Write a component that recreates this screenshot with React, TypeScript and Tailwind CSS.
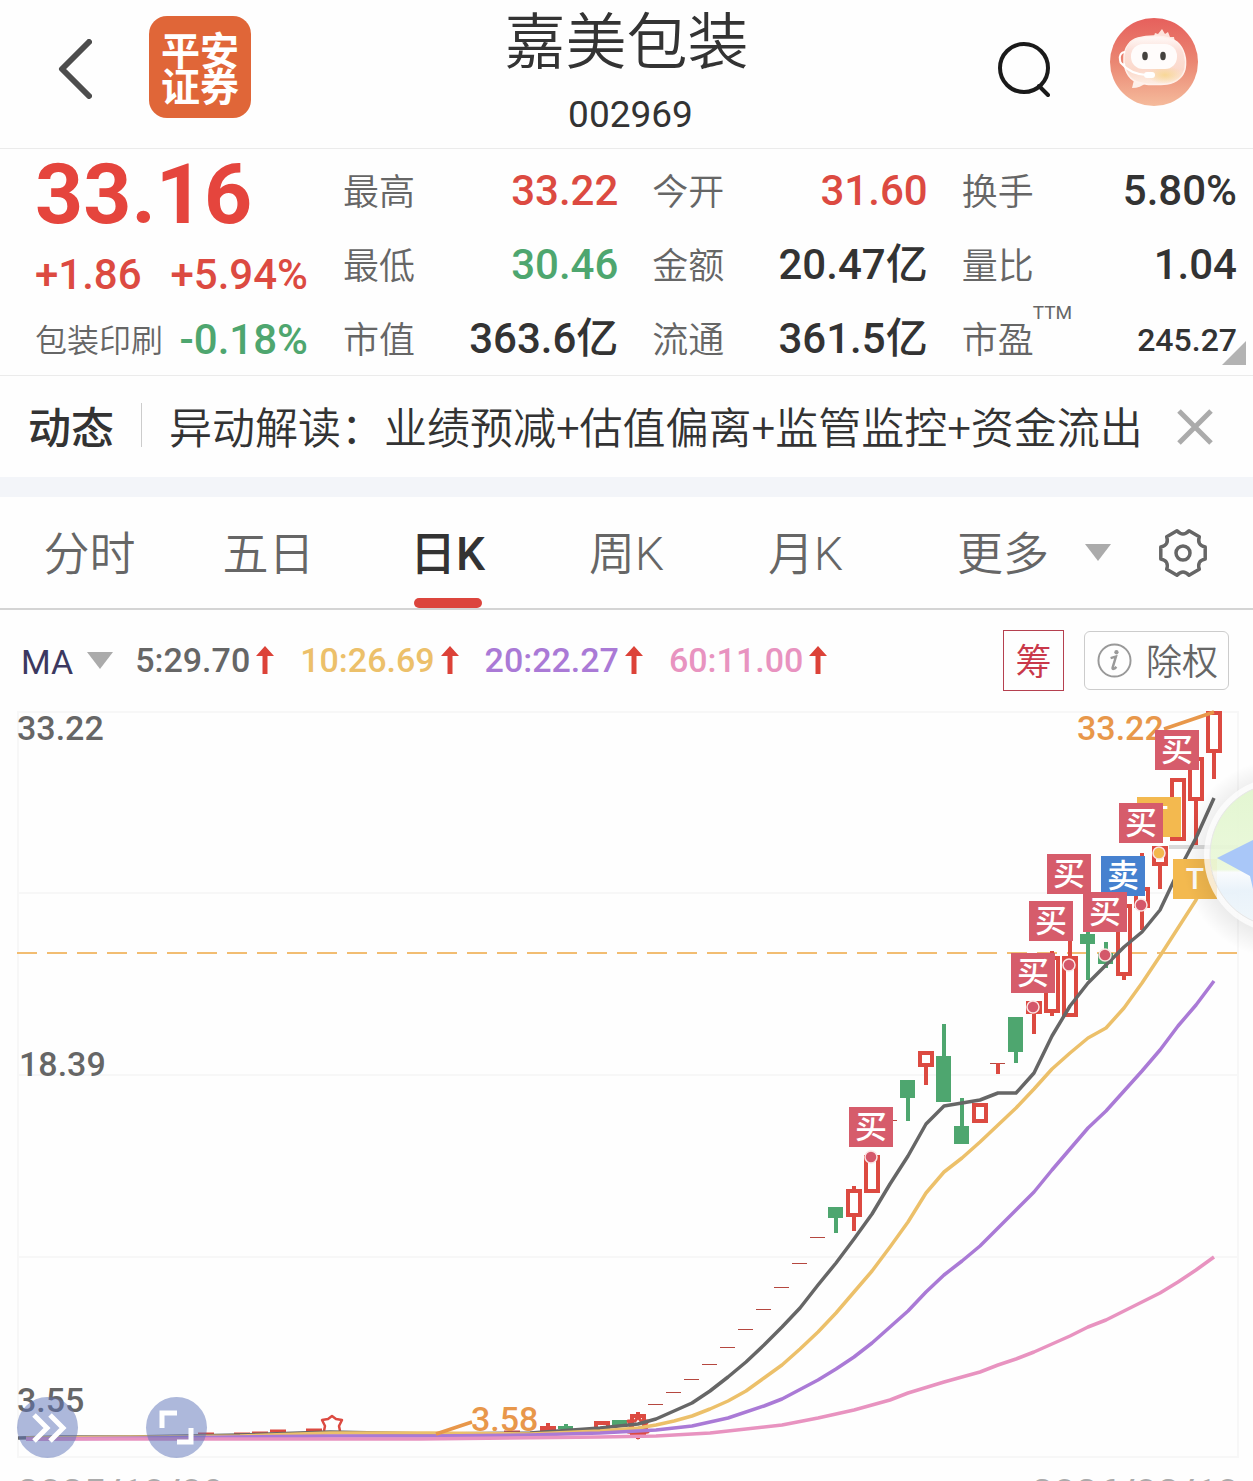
import type { ReactNode } from "react";

const UP = "#dc4a41";
const DOWN = "#4ea66f";

type Candle = { x: number; top: number; bottom: number; high?: number; low?: number; down?: boolean };

const candles: Candle[] = [
  { x: 1214, top: 711, bottom: 753, low: 779 },
  { x: 1196, top: 757, bottom: 801, low: 845 },
  { x: 1178, top: 778, bottom: 841 },
  { x: 1160, top: 846, bottom: 866, low: 889 },
  { x: 1142, top: 887, bottom: 908, high: 853, low: 930 },
  { x: 1124, top: 904, bottom: 976, low: 980 },
  { x: 1106, top: 953, bottom: 964, high: 942, low: 968, down: true },
  { x: 1088, top: 934, bottom: 944, high: 925, low: 980, down: true },
  { x: 1070, top: 956, bottom: 1017, high: 930 },
  { x: 1052, top: 956, bottom: 1013, high: 951, low: 1016 },
  { x: 1034, top: 1001, bottom: 1014, low: 1034 },
  { x: 1016, top: 1017, bottom: 1052, low: 1063, down: true },
  { x: 980, top: 1103, bottom: 1123 },
  { x: 962, top: 1126, bottom: 1144, high: 1098, down: true },
  { x: 944, top: 1056, bottom: 1102, high: 1024, down: true },
  { x: 926, top: 1051, bottom: 1067, low: 1085 },
  { x: 908, top: 1080, bottom: 1098, low: 1121, down: true },
  { x: 872, top: 1155, bottom: 1193 },
  { x: 854, top: 1189, bottom: 1217, high: 1186, low: 1231 },
  { x: 836, top: 1207, bottom: 1218, low: 1233, down: true },
  { x: 638, top: 1414, bottom: 1435, high: 1412, low: 1439 },
  { x: 620, top: 1420, bottom: 1425, down: true },
  { x: 602, top: 1421, bottom: 1431 },
  { x: 566, top: 1426, bottom: 1429, high: 1424, down: true },
  { x: 548, top: 1426, bottom: 1433, high: 1423 },
];

const flatDays: [number, number][] = [
  [890, 1120], [818, 1237], [800, 1263], [782, 1287], [764, 1309], [746, 1329],
  [728, 1347], [710, 1364], [692, 1379], [674, 1392], [656, 1404], [998, 1063],
];

const smallDays: [number, number][] = [
  [206, 1434], [242, 1434], [260, 1433], [278, 1431], [314, 1430], [512, 1432],
];

const averages = [
  {
    color: "#666666",
    points:
      "18,1438 60,1437 130,1437 240,1435 330,1432 430,1434 530,1433 600,1428 638,1424 656,1419 674,1411 692,1403 710,1391 728,1377 746,1362 764,1345 782,1327 800,1308 818,1285 836,1263 854,1239 872,1214 890,1184 908,1156 926,1124 944,1106 980,1100 998,1093 1016,1093 1034,1073 1052,1036 1070,1006 1088,983 1106,965 1124,947 1142,932 1160,910 1178,872 1196,838 1214,798",
  },
  {
    color: "#ecc06a",
    points:
      "26,1438 150,1437 240,1436 330,1433 430,1433 530,1434 600,1431 638,1428 656,1425 674,1421 692,1416 710,1409 728,1401 746,1391 764,1378 782,1365 800,1349 818,1332 836,1313 854,1292 872,1271 890,1247 908,1222 926,1193 944,1172 962,1158 980,1142 998,1125 1016,1108 1034,1089 1052,1069 1070,1053 1088,1038 1106,1028 1124,1008 1142,983 1160,956 1178,928 1196,900 1214,866",
  },
  {
    color: "#aa7ad6",
    points:
      "26,1439 150,1438 330,1436 430,1436 530,1435 600,1433 656,1430 692,1426 728,1418 764,1406 782,1399 818,1380 836,1369 854,1357 872,1343 908,1311 926,1292 944,1275 962,1261 980,1246 998,1228 1016,1210 1034,1192 1052,1170 1070,1149 1088,1128 1106,1111 1124,1091 1142,1071 1160,1050 1178,1026 1196,1005 1214,981",
  },
  {
    color: "#e893c0",
    points:
      "26,1439 300,1439 420,1439 600,1437 656,1436 710,1433 746,1429 782,1425 818,1418 854,1410 890,1400 908,1393 944,1382 980,1372 998,1365 1016,1359 1034,1352 1070,1336 1088,1327 1106,1320 1142,1302 1160,1293 1178,1282 1196,1270 1214,1257",
  },
];

const dots: [number, number, string][] = [
  [871, 1157, "#d4576a"],
  [1033, 1007, "#d4576a"],
  [1069, 965, "#d4576a"],
  [1105, 955, "#d4576a"],
  [1141, 905, "#d4576a"],
  [1159, 853, "#f2b84e"],
];

const tags: [number, number, string][] = [
  [1137, 797, "T"],
  [849, 1107, "买"],
  [1011, 953, "买"],
  [1029, 901, "买"],
  [1047, 854, "买"],
  [1101, 856, "卖"],
  [1083, 892, "买"],
  [1119, 803, "买"],
  [1155, 730, "买"],
  [1173, 859, "T"],
];

const tagColor: Record<string, string> = { 买: "#d65c6b", 卖: "#4681cf", T: "#f3b94f" };

function CandleMark({ x, top, bottom, high, low, down }: Candle) {
  const color = down ? DOWN : UP;
  return (
    <g>
      {high !== undefined && <rect x={x - 2} y={high} width={4} height={top - high} fill={color} />}
      {low !== undefined && <rect x={x - 2} y={bottom} width={4} height={low - bottom} fill={color} />}
      {down ? (
        <rect x={x - 8} y={top} width={15} height={bottom - top} fill={color} />
      ) : (
        <rect x={x - 6} y={top + 2} width={12} height={bottom - top - 4} fill="#fff" stroke={color} strokeWidth={4} />
      )}
    </g>
  );
}

function Chart() {
  return (
    <svg viewBox="0 700 1253 760" className="block w-full" role="img" aria-label="日K线图">
      <g stroke="#f7f7f7" strokeWidth="2" fill="none">
        <rect x="18" y="712" width="1220" height="745" />
        <path d="M18 893H1238M18 1075H1238M18 1257H1238" />
      </g>
      <path d="M17 953H1238" stroke="#f2bd72" strokeWidth="2" strokeDasharray="20 10" />
      <path d="M1169 847H1238" stroke="#d9d9d9" strokeWidth="4" />
      {flatDays.map(([x, y]) => (
        <path key={x} d={`M${x - 8} ${y}.500h15`} stroke="#b5473f" strokeWidth="1" />
      ))}
      <path d="M998 1063V1074" stroke={UP} strokeWidth="4" />
      {smallDays.map(([x, y]) => (
        <path key={x} d={`M${x - 8} ${y}h16`} stroke={UP} strokeWidth="3" />
      ))}
      {candles.map((c) => (
        <CandleMark key={c.x} {...c} />
      ))}
      <path
        d="M324 1431l1-5-3-6 6-1 4-3 4 3 6 1-3 6 1 5"
        fill="#fff"
        stroke={UP}
        strokeWidth="2.5"
        strokeLinejoin="round"
      />
      <path
        d="M638 1417l3 4 7 0-3 5 3 6-7 1-3 5-3-5-7-1 3-6-3-5 7 0z"
        fill="none"
        stroke={UP}
        strokeWidth="3"
        strokeLinejoin="round"
      />
      {averages.map((a) => (
        <polyline key={a.color} points={a.points} fill="none" stroke={a.color} strokeWidth="3.5" strokeLinejoin="round" />
      ))}
      {dots.map(([x, y, fill]) => (
        <circle key={x} cx={x} cy={y} r="6" fill={fill} stroke="#fbe3e3" strokeWidth="1.5" />
      ))}
      <g className="font-[Roboto,sans-serif] text-[34px] font-medium">
        <g fill="#666666">
          <text x="17" y="740">33.22</text>
          <text x="19" y="1076">18.39</text>
          <text x="17" y="1412">3.55</text>
        </g>
        <g fill="#e8974a">
          <text x="1077" y="740">33.22</text>
          <text x="471" y="1431">3.58</text>
        </g>
      </g>
      <path d="M1164 729L1214 712M436 1434L472 1422" stroke="#e8974a" strokeWidth="3.5" />
      {tags.map(([x, y, label]) => (
        <g key={`${x}-${y}`}>
          <rect x={x} y={y} width="44" height="40" fill={tagColor[label]} />
          <text
            x={x + 22}
            y={label === "T" ? y + 30 : y + 31}
            textAnchor="middle"
            fill="#fff"
            className={
              label === "T"
                ? "font-[Roboto,sans-serif] text-[30px] font-medium"
                : "font-['Noto_Sans_CJK_SC',sans-serif] text-[32px] font-medium"
            }
          >
            {label}
          </text>
        </g>
      ))}
    </svg>
  );
}

function FloatingBall() {
  return (
    <svg viewBox="0 0 80 220" className="h-[220px] w-20" aria-hidden="true">
      <defs>
        <linearGradient id="ball" x1="0" y1="0" x2="0" y2="1">
          <stop offset="0" stopColor="#e2f7cf" />
          <stop offset="0.6" stopColor="#ebf9da" />
          <stop offset="0.62" stopColor="#fbfdff" />
          <stop offset="0.75" stopColor="#e9f3fb" />
          <stop offset="1" stopColor="#f1f8fc" />
        </linearGradient>
        <radialGradient id="halo">
          <stop offset="0.76" stopColor="#000" stopOpacity="0.07" />
          <stop offset="1" stopColor="#000" stopOpacity="0" />
        </radialGradient>
      </defs>
      <circle cx="109" cy="114" r="100" fill="url(#halo)" />
      <circle cx="109" cy="110" r="75" fill="none" stroke="#fff" strokeWidth="6" strokeOpacity="0.75" />
      <circle cx="109" cy="110" r="72" fill="url(#ball)" fillOpacity="0.92" stroke="#e8e8e8" />
      <path d="M44 113L80 95V144L77 131z" fill="#a9c7f8" />
    </svg>
  );
}

function gearPath() {
  const at = (deg: number, r: number) => {
    const a = (deg * Math.PI) / 180;
    return `${(25 + r * Math.cos(a)).toFixed(1)} ${(25 + r * Math.sin(a)).toFixed(1)}`;
  };
  let d = `M${at(-15, 23)}`;
  for (let k = 0; k < 6; k++) {
    const a = k * 60;
    d += `L${at(a + 15, 23)}C${at(a + 24, 18)} ${at(a + 36, 18)} ${at(a + 45, 23)}`;
  }
  return d + "Z";
}

function Avatar() {
  return (
    <svg viewBox="0 0 88 88" className="size-[88px]" aria-hidden="true">
      <defs>
        <linearGradient id="sky" x1="0" y1="0" x2="0" y2="1">
          <stop offset="0" stopColor="#e6605c" />
          <stop offset="0.5" stopColor="#ea8672" />
          <stop offset="1" stopColor="#f5bb9c" />
        </linearGradient>
        <linearGradient id="head" x1="0" y1="0" x2="0" y2="1">
          <stop offset="0" stopColor="#fffaf8" />
          <stop offset="0.3" stopColor="#fce0d9" />
          <stop offset="0.7" stopColor="#fbd9cb" />
          <stop offset="1" stopColor="#fdeee4" />
        </linearGradient>
        <radialGradient id="glow">
          <stop offset="0" stopColor="#f8d796" />
          <stop offset="1" stopColor="#f8d796" stopOpacity="0" />
        </radialGradient>
      </defs>
      <circle cx="44" cy="44" r="44" fill="url(#sky)" />
      <path d="M43 21l2-6 3 1 4-5 3 5 3-2 2 5 4 0 1 6z" fill="#fde3dc" />
      <path d="M25 58l-3 12c6 0 10-2 14-5z" fill="#fdf0ea" />
      <path
        d="M28 20c12-3 30-3 39 4 7 6 10 17 8 27-2 8-8 13-18 15-11 1-26 1-34-4-7-5-10-15-9-24 1-9 6-16 14-18z"
        fill="url(#head)"
        stroke="#fff1ec"
        strokeWidth="1.5"
      />
      <ellipse cx="55" cy="57" rx="18" ry="9" fill="url(#glow)" />
      <rect x="21" y="26" width="46" height="25" rx="12" fill="#fffcfb" />
      <ellipse cx="35" cy="38" rx="2.8" ry="4.2" fill="#45423f" />
      <ellipse cx="53" cy="38" rx="2.8" ry="4.2" fill="#45423f" />
      <path d="M15 34c-4 0-6 4-5 8 0 4 3 5 5 4M12 46c5 6 13 10 24 11" fill="none" stroke="#fff" strokeWidth="2" />
      <rect x="34" y="54" width="11" height="6" rx="3" fill="#fff" />
    </svg>
  );
}

function Triangle() {
  return (
    <svg viewBox="0 0 26 17" className="h-[17px] w-[26px]" aria-hidden="true">
      <path d="M0 0H26L13 17z" fill="#ababab" />
    </svg>
  );
}

function ArrowUp() {
  return (
    <svg viewBox="0 0 18 28" className="h-7 w-[18px]" aria-hidden="true">
      <path d="M9 0L18 10H11.500V28H6.500V10H0z" fill="#dc4238" />
    </svg>
  );
}

function Stat({ label, value, tone, sup, small }: { label: string; value: string; tone: string; sup?: string; small?: boolean }) {
  return (
    <div className="relative flex h-[74px] items-center justify-between">
      <dt className="pt-1.5 text-[36px] leading-[52px] font-[350] text-[#666666]">
        {label}
        {sup && <sup className="absolute top-0 left-[71px] text-[19px] leading-6 font-normal">{sup}</sup>}
      </dt>
      <dd className={`${small ? "pt-1 text-[32px]" : "text-[42px]"} font-medium ${tone}`}>{value}</dd>
    </div>
  );
}

const red = "text-[#dc4a41]";
const green = "text-[#4ea66f]";
const ink = "text-[#333333]";

const stats = [
  { label: "最高", value: "33.22", tone: red },
  { label: "今开", value: "31.60", tone: red },
  { label: "换手", value: "5.80%", tone: ink },
  { label: "最低", value: "30.46", tone: green },
  { label: "金额", value: "20.47亿", tone: ink },
  { label: "量比", value: "1.04", tone: ink },
  { label: "市值", value: "363.6亿", tone: ink },
  { label: "流通", value: "361.5亿", tone: ink },
  { label: "市盈", value: "245.27", tone: ink, sup: "TTM", small: true },
];

const legend = [
  { text: "5:29.70", tone: "text-[#666666]" },
  { text: "10:26.69", tone: "text-[#ecc06a]" },
  { text: "20:22.27", tone: "text-[#aa7ad6]" },
  { text: "60:11.00", tone: "text-[#e893c0]" },
];

function RoundButton({ label, children }: { label: string; children: ReactNode }) {
  return (
    <button aria-label={label} className="size-[61px] rounded-full bg-[#5c72b8]/50">
      <svg viewBox="0 0 61 61" className="size-full" fill="none" stroke="#fff" strokeWidth="5" aria-hidden="true">
        {children}
      </svg>
    </button>
  );
}

export default function App() {
  return (
    <div className="h-screen overflow-hidden bg-[#fefefe] font-[Roboto,'Noto_Sans_CJK_SC',sans-serif] text-[#333333]">
      <header className="grid h-[149px] grid-cols-[1fr_auto_1fr] items-start border-b border-[#ebebeb]">
        <div className="flex items-center gap-[57px] pt-4 pl-[58px]">
          <button aria-label="返回" className="pt-1">
            <svg viewBox="0 0 34 60" className="h-[60px] w-[34px]" aria-hidden="true">
              <path d="M31 3L4 30L31 57" fill="none" stroke="#4d4d4d" strokeWidth="6" strokeLinecap="round" strokeLinejoin="round" />
            </svg>
          </button>
          <div className="flex size-[102px] flex-col justify-center rounded-[18px] bg-[#e06638] pt-1.5 text-center text-[39px] leading-[36px] font-bold text-white">
            <span>平安</span>
            <span>证券</span>
          </div>
        </div>
        <div className="text-center">
          <h1 className="pt-1.5 text-[61px] leading-[74px] font-[350]">嘉美包装</h1>
          <p className="pt-3 pl-2 text-[37px] leading-[46px]">002969</p>
        </div>
        <div className="flex items-start justify-end gap-[60px] pt-[18px] pr-[55px]">
          <button aria-label="搜索" className="pt-6">
            <svg viewBox="0 0 52 56" className="h-14 w-[52px]" fill="none" stroke="#1a1a1a" aria-hidden="true">
              <circle cx="26" cy="26" r="24" strokeWidth="4" />
              <path d="M41 44l9 9" strokeWidth="4" strokeLinecap="round" />
            </svg>
          </button>
          <button aria-label="智能助手">
            <Avatar />
          </button>
        </div>
      </header>

      <section className="relative grid h-[227px] grid-cols-[273px_1fr] gap-x-[35px] border-b border-[#ebebeb] pr-4 pl-[35px]">
        <div>
          <p className="pt-1 text-[84px] leading-[84px] font-bold whitespace-nowrap text-[#e5453d]">33.16</p>
          <p className="flex justify-between pt-2 text-[42px] leading-[60px] font-medium text-[#dc4a41]">
            <span>+1.86</span>
            <span>+5.94%</span>
          </p>
          <p className="flex items-center justify-between leading-[68px]">
            <span className="pt-0.5 text-[32px] font-[350] text-[#666666]">包装印刷</span>
            <span className="text-[42px] font-medium text-[#4ea66f]">-0.18%</span>
          </p>
        </div>
        <dl className="grid grid-cols-3 content-start gap-x-[34px] pt-1">
          {stats.map((s) => (
            <Stat key={s.label} {...s} />
          ))}
        </dl>
        <svg viewBox="0 0 24 24" className="absolute right-[7px] bottom-2.5 size-6" aria-hidden="true">
          <path d="M24 0V24H0z" fill="#b3b3b3" />
        </svg>
      </section>

      <section className="flex h-[101px] items-center pl-7">
        <h2 className="pt-1 text-[43px] leading-[60px] font-medium">动态</h2>
        <span className="mx-[27px] mb-1 h-11 w-px bg-[#cccccc]" />
        <a href="#news" className="flex-1 pb-1 font-['Noto_Sans_CJK_SC',sans-serif] text-[43px] leading-[60px] font-[350] whitespace-nowrap">
          异动解读：业绩预减+估值偏离+监管监控+资金流出
        </a>
        <button aria-label="关闭" className="mr-10">
          <svg viewBox="0 0 36 36" className="size-9" aria-hidden="true">
            <path d="M2 2L34 34M34 2L2 34" stroke="#ababab" strokeWidth="5" />
          </svg>
        </button>
      </section>

      <div className="h-5 bg-[#f3f5f9]" />

      <nav className="flex h-[113px] border-b-2 border-[#d4d4d4] text-[46px] font-[350] text-[#666666]">
        {["分时", "五日", "日K", "周K", "月K"].map((t) =>
          t === "日K" ? (
            <button key={t} aria-current="page" className="relative flex-1 pt-1 font-medium text-[#333333]">
              {t}
              <span className="absolute bottom-0 left-1/2 h-2.5 w-[68px] -translate-x-1/2 rounded-full bg-[#dc453d]" />
            </button>
          ) : (
            <button key={t} className="flex-1 pt-1">
              {t}
            </button>
          ),
        )}
        <div className="flex w-[358px] items-center pl-[62px]">
          <button className="flex items-center gap-9">
            <span className="pt-1">更多</span>
            <Triangle />
          </button>
          <button aria-label="设置" className="ml-[47px]">
            <svg viewBox="0 0 50 50" className="size-[50px]" fill="none" stroke="#666666" strokeWidth="3.500" strokeLinejoin="round" aria-hidden="true">
              <path d={gearPath()} />
              <circle cx="25" cy="25" r="7" />
            </svg>
          </button>
        </div>
      </nav>

      <section className="flex h-[90px] items-center justify-between pt-2.5 pr-6 pl-[21px]">
        <div className="flex items-center text-[34px] leading-[48px]">
          <button className="flex items-center gap-3.5 text-[#3c3860]">
            <span className="pt-1">MA</span>
            <Triangle />
          </button>
          <ul className="flex gap-[26px] pl-[22px] font-medium">
            {legend.map((l) => (
              <li key={l.text} className={`flex items-center gap-1.5 ${l.tone}`}>
                {l.text}
                <ArrowUp />
              </li>
            ))}
          </ul>
        </div>
        <div className="flex items-center gap-5 text-[36px] leading-[48px] font-[350]">
          <button className="size-[61px] border border-[#b5404f] pt-1.5 text-[#c9384a]">筹</button>
          <button className="flex h-[59px] w-[145px] items-center justify-between rounded-md border border-[#cccccc] pr-2.5 pl-3 text-[#666666]">
            <svg viewBox="0 0 36 36" className="size-[35px]" aria-hidden="true">
              <circle cx="18" cy="18" r="16.500" fill="none" stroke="#999" strokeWidth="2" />
              <circle cx="20" cy="9.500" r="2.200" fill="#999" />
              <path d="M14 15.500l5.500-1.500-3.500 11.500c-.3 2 1.500 1.500 4-1" fill="none" stroke="#999" strokeWidth="2.500" />
            </svg>
            <span className="pt-1.5">除权</span>
          </button>
        </div>
      </section>

      <main>
        <div className="relative overflow-hidden">
          <Chart />
          <div className="absolute bottom-0.5 left-[17px] flex gap-[68px]">
            <RoundButton label="展开">
              <path d="M17 18L30 31L17 44M33 18L46 31L33 44" />
            </RoundButton>
            <RoundButton label="全屏">
              <path d="M16 31V16H31M31 45H45V31" />
            </RoundButton>
          </div>
          <div className="absolute top-[45px] right-0">
            <FloatingBall />
          </div>
        </div>
        <div className="flex justify-between pt-2.5 pr-3.5 pl-[17px] text-[39px] leading-[48px] font-medium text-[#ababab]">
          <time>2025/10/09</time>
          <time>2026/02/10</time>
        </div>
      </main>
    </div>
  );
}
